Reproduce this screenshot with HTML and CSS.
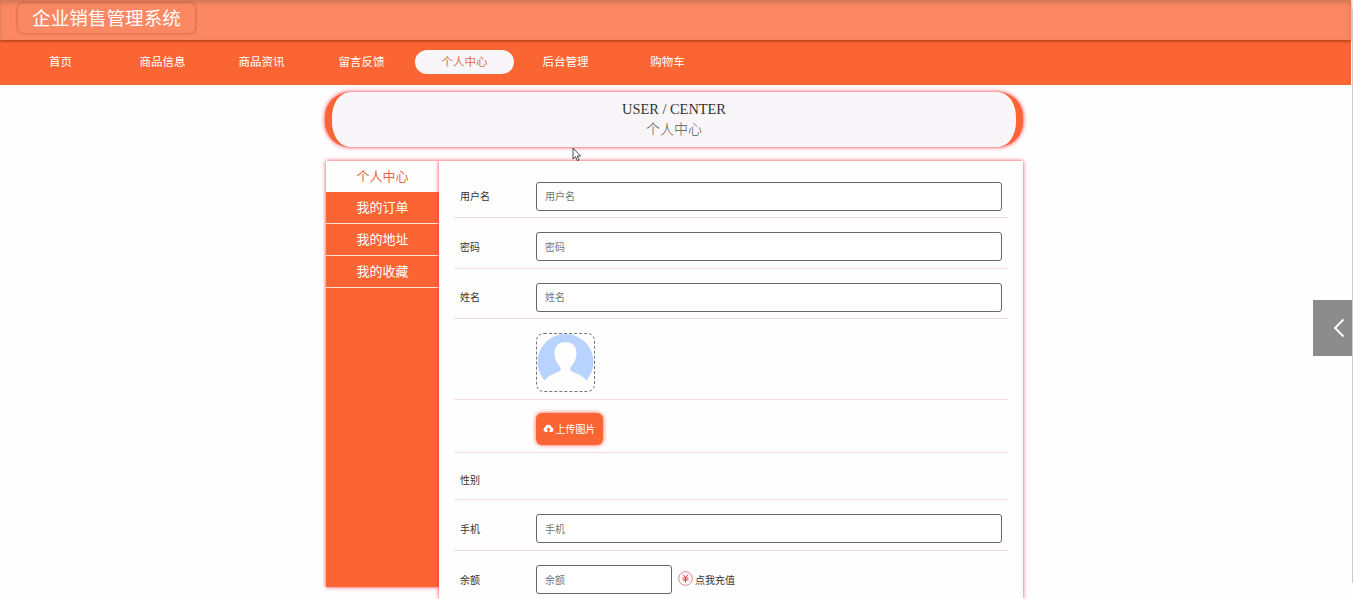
FILE: index.html
```html
<!DOCTYPE html>
<html lang="zh-CN">
<head>
    <meta charset="UTF-8">
    <meta name="viewport" content="width=device-width, initial-scale=1.0">
    <title>个人中心</title>
    <link rel="stylesheet" href="styles.css">
</head>
<body>

    <!-- 顶部 -->
    <header class="header">
        <div class="logo">企业销售管理系统</div>
    </header>

    <!-- 导航 -->
    <nav class="nav">
        <a href="#">首页</a>
        <a href="#">商品信息</a>
        <a href="#">商品资讯</a>
        <a href="#">留言反馈</a>
        <a href="#" class="active">个人中心</a>
        <a href="#">后台管理</a>
        <a href="#">购物车</a>
    </nav>

    <div class="container">
        <div class="title">
            <span class="title-en">USER / CENTER</span>
            <span class="title-cn">个人中心</span>
        </div>

        <div class="center">
            <!-- 左侧菜单 -->
            <div class="sidebar">
                <a href="#" class="active">个人中心</a>
                <a href="#">我的订单</a>
                <a href="#">我的地址</a>
                <a href="#">我的收藏</a>
            </div>

            <!-- 个人信息表单 -->
            <form class="user-form">
                <div class="form-item">
                    <label for="username">用户名</label>
                    <input type="text" id="username" placeholder="用户名">
                </div>
                <div class="form-item">
                    <label for="password">密码</label>
                    <input type="password" id="password" placeholder="密码">
                </div>
                <div class="form-item">
                    <label for="realname">姓名</label>
                    <input type="text" id="realname" placeholder="姓名">
                </div>
                <div class="form-item form-item-avatar">
                    <div class="avatar">
                        <svg viewBox="0 0 57 57" width="57" height="57">
                            <path fill="#b8d3ff" d="M7.500 46.500A28 28 0 1 1 49.500 46.500Q45 41 35 37.500Q32.500 36.500 33.500 33.500Q39.500 27 39.500 18.500Q39 8 28.500 8Q18 8 17.500 18.500Q17.500 27 23.500 33.500Q24.500 36.500 22 37.500Q12 41 7.500 46.500Z"/>
                        </svg>
                    </div>
                </div>
                <div class="form-item form-item-upload">
                    <button type="button" class="upload-btn">
                        <svg viewBox="0 0 12 10" width="11" height="9">
                            <path fill="#fff" d="M3 9A2.700 2.700 0 0 1 1.800 4A4 4 0 0 1 9.500 3.500A2.800 2.800 0 0 1 9 9H7.100V6.500H8.600L6 3.800L3.400 6.500H4.900V9Z"/>
                        </svg>
                        <span>上传图片</span>
                    </button>
                </div>
                <div class="form-item form-item-sex">
                    <label>性别</label>
                </div>
                <div class="form-item">
                    <label for="phone">手机</label>
                    <input type="text" id="phone" placeholder="手机">
                </div>
                <div class="form-item form-item-money">
                    <label for="money">余额</label>
                    <input type="text" id="money" class="short" placeholder="余额">
                    <a href="#" class="recharge">
                        <svg viewBox="0 0 15 15" width="15" height="15">
                            <circle cx="7.500" cy="7.500" r="6.800" fill="none" stroke="#e8707c" stroke-width="0.900"/>
                            <path fill="none" stroke="#e0303e" stroke-width="1" d="M5 3.500L7.500 6.500L10 3.500M4.500 7H10.500M4.500 9H10.500M7.500 6.500V11.500"/>
                        </svg>
                        <span>点我充值</span>
                    </a>
                </div>
            </form>
        </div>
    </div>

    <!-- 侧边展开按钮 -->
    <div class="side-toggle">
        <svg viewBox="0 0 12 20" width="12" height="20">
            <path fill="none" stroke="#fff" stroke-width="1.900" d="M10.500 1.500L2 10L10.500 18.500"/>
        </svg>
    </div>
    <div class="scroll-bar"></div>

    <!-- 鼠标指针 -->
    <svg class="cursor" viewBox="0 0 10 15" width="10" height="15">
        <path fill="#fff" stroke="#333" stroke-width="0.900" d="M1 1V12L3.500 9.700L5.300 13.700L7 13L5.300 9H8.500Z"/>
    </svg>

</body>
</html>
```
FILE: styles.css
```css
* {
    box-sizing: border-box;
}
body {
    margin: 0;
    background-color: #fefefe;
    color: #333;
    font-family: "Noto Sans CJK SC", sans-serif;
    font-size: 10px;
}
a {
    text-decoration: none;
    color: inherit;
}

/* 顶部 */
.header {
    position: relative;
    width: 1351px;
    height: 40px;
    padding: 3px 0 0 18px;
    background-color: #fb8862;
    box-shadow: 0 1px 3px rgba(100, 20, 0, 0.6), inset 0 3px 4px rgba(120, 80, 60, 0.3);
}
.logo {
    width: 177px;
    height: 30px;
    line-height: 28px;
    text-align: center;
    font-size: 18.6px;
    color: #fff;
    border-radius: 5px;
    box-shadow: 0 0 3px rgba(120, 20, 0, 0.5);
}

/* 导航 */
.nav {
    display: grid;
    grid-template-columns: 102px 99px 100px 103px 101px 102px 100px;
    width: 1351px;
    height: 45px;
    padding: 10px 0 0 11px;
    background-color: #fb6534;
}
.nav a {
    width: 99px;
    height: 24px;
    line-height: 23px;
    border-radius: 12px;
    text-align: center;
    font-size: 11.5px;
    color: #fff;
}
.nav a.active {
    background-color: #f8f6f9;
    color: #e56a45;
}

.container {
    width: 698px;
    height: 507px;
    margin: 7px 0 0 325px;
}
.title {
    display: flex;
    flex-direction: column;
    align-items: center;
    height: 55px;
    padding-top: 8px;
    background-color: #f8f6f9;
    border: solid #fb6534;
    border-width: 0 7px;
    border-radius: 25px;
    box-shadow: 0 0 4px #f23;
}
.title-en {
    font-family: "Liberation Serif", serif;
    font-size: 14.400px;
    line-height: 19px;
}
.title-cn {
    font-size: 14px;
    line-height: 19px;
    font-weight: 300;
    color: #555;
}

.center {
    display: flex;
    align-items: flex-start;
    margin-top: 14px;
    padding-left: 1px;
}
.sidebar {
    width: 113px;
    height: 426px;
    background-color: #fb6534;
    box-shadow: 0 0 4px #f34;
}
.sidebar a {
    display: block;
    height: 32px;
    line-height: 29px;
    border-bottom: 1px solid #ffe3d8;
    text-align: center;
    font-size: 13px;
    color: #fff;
}
.sidebar a.active {
    height: 31px;
    border-bottom: none;
    background-color: #fefefe;
    color: #e56a45;
}

/* 表单 */
.user-form {
    flex: 1;
    height: 438px;
    padding: 6.400px 15px 0;
    background-color: #fefefe;
    box-shadow: 0 0 4px #f34;
}
.form-item {
    display: flex;
    align-items: center;
    height: 50.600px;
    padding: 8px 6px 0;
    border-bottom: 1px solid #f5dcdf;
}
.form-item label {
    width: 76px;
    margin-top: -1px;
}
.form-item input {
    width: 466px;
    height: 29px;
    padding: 0 8px 1px;
    border: 1px solid #666;
    border-radius: 3px;
    background-color: #fff;
    font-family: inherit;
    font-size: 10px;
    outline: none;
}
.form-item input::placeholder {
    color: #757575;
}
.form-item input.short {
    width: 136px;
}
.form-item-avatar {
    height: 80.500px;
    padding: 7px 6px 0 82px;
}
.avatar {
    width: 59px;
    height: 59px;
    border: 1px dashed #777;
    border-radius: 8px;
}
.avatar svg {
    display: block;
}
.form-item-upload {
    height: 53.500px;
    padding: 7px 6px 0 82px;
}
.upload-btn {
    display: flex;
    align-items: center;
    justify-content: center;
    gap: 2px;
    width: 67px;
    height: 32px;
    padding: 0 1px 1px 0;
    border: none;
    border-radius: 6px;
    background-color: #fb6534;
    color: #fff;
    font-family: inherit;
    font-size: 10px;
    box-shadow: 0 0 4px #f54;
}
.form-item-sex {
    height: 47px;
}
.form-item-money {
    height: 49px;
    padding-top: 9px;
    border-bottom: none;
}
.recharge {
    display: flex;
    align-items: center;
    gap: 2px;
    margin-left: 6px;
}
.recharge svg {
    margin-top: -2px;
}

.side-toggle {
    position: fixed;
    right: 0;
    top: 300px;
    display: flex;
    align-items: center;
    justify-content: flex-end;
    width: 40px;
    height: 56px;
    padding-right: 8px;
    background-color: #8c8c8c;
}
.scroll-bar {
    position: fixed;
    right: 0;
    top: 9px;
    width: 1px;
    height: 574px;
    background-color: #ccc;
}
.cursor {
    position: fixed;
    left: 572px;
    top: 147px;
}
```
